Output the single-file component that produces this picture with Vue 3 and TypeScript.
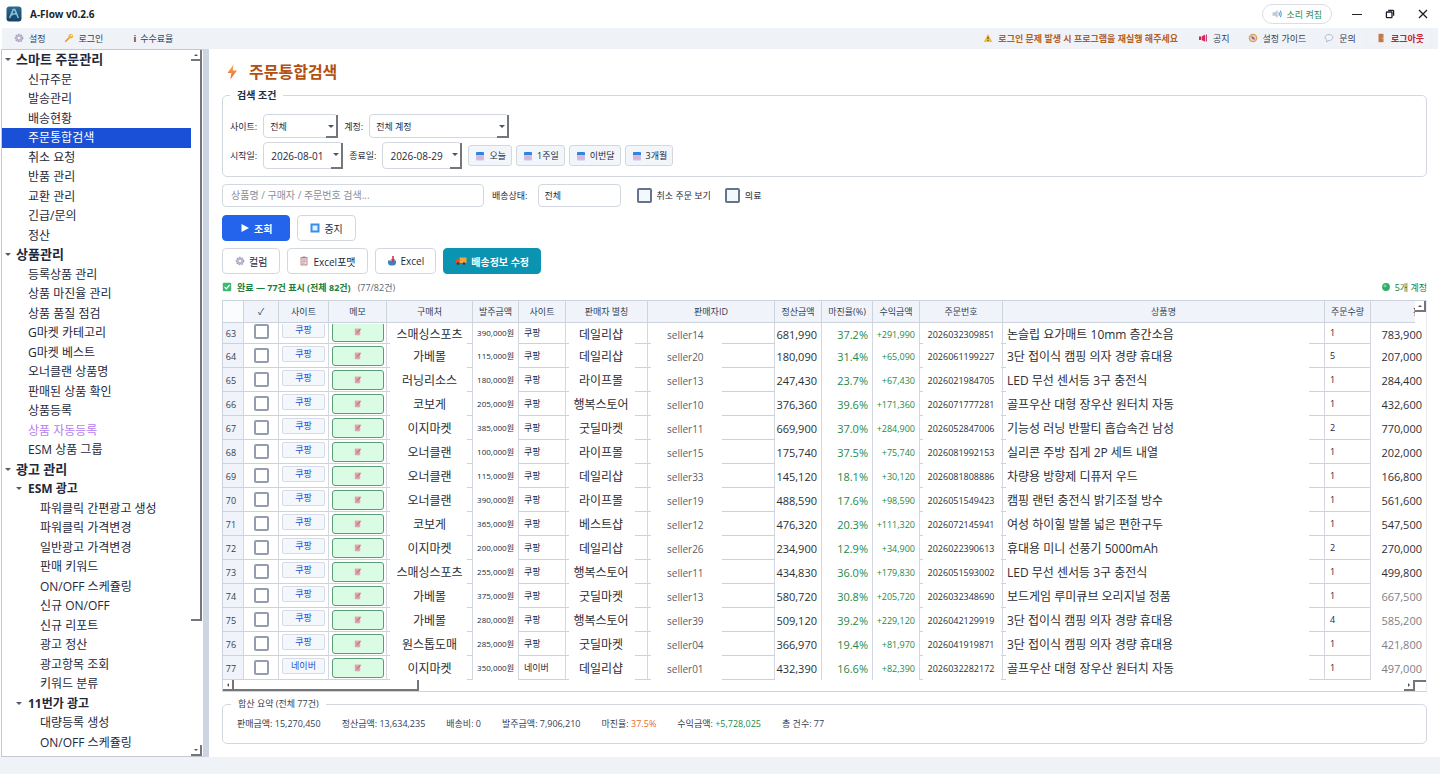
<script setup lang="ts">
import { ref } from 'vue'

interface TreeNode {
  text: string
  level: 'root' | 'item' | 'group' | 'leaf'
  accent?: boolean
}

interface OrderRow {
  no: number
  site: string
  vendor: string
  cost: string
  alias: string
  seller: string
  settle: string
  margin: string
  profit: string
  order: string
  product: string
  qty: number
  price: string
}

const tree: TreeNode[] = [
  { text: '스마트 주문관리', level: 'root' },
  { text: '신규주문', level: 'item' },
  { text: '발송관리', level: 'item' },
  { text: '배송현황', level: 'item' },
  { text: '주문통합검색', level: 'item' },
  { text: '취소 요청', level: 'item' },
  { text: '반품 관리', level: 'item' },
  { text: '교환 관리', level: 'item' },
  { text: '긴급/문의', level: 'item' },
  { text: '정산', level: 'item' },
  { text: '상품관리', level: 'root' },
  { text: '등록상품 관리', level: 'item' },
  { text: '상품 마진율 관리', level: 'item' },
  { text: '상품 품질 점검', level: 'item' },
  { text: 'G마켓 카테고리', level: 'item' },
  { text: 'G마켓 베스트', level: 'item' },
  { text: '오너클랜 상품명', level: 'item' },
  { text: '판매된 상품 확인', level: 'item' },
  { text: '상품등록', level: 'item' },
  { text: '상품 자동등록', level: 'item', accent: true },
  { text: 'ESM 상품 그룹', level: 'item' },
  { text: '광고 관리', level: 'root' },
  { text: 'ESM 광고', level: 'group' },
  { text: '파워클릭 간편광고 생성', level: 'leaf' },
  { text: '파워클릭 가격변경', level: 'leaf' },
  { text: '일반광고 가격변경', level: 'leaf' },
  { text: '판매 키워드', level: 'leaf' },
  { text: 'ON/OFF 스케쥴링', level: 'leaf' },
  { text: '신규 ON/OFF', level: 'leaf' },
  { text: '신규 리포트', level: 'leaf' },
  { text: '광고 정산', level: 'leaf' },
  { text: '광고항목 조회', level: 'leaf' },
  { text: '키워드 분류', level: 'leaf' },
  { text: '11번가 광고', level: 'group' },
  { text: '대량등록 생성', level: 'leaf' },
  { text: 'ON/OFF 스케쥴링', level: 'leaf' },
]
const selected = ref(4)

const raw: [string, string, string, string, string, string, string, string, string, string, number, string][] = [
  ['쿠팡', '스매싱스포츠', '390,000원', '데일리샵', 'seller14', '681,990', '37.2%', '+291,990', '2026032309851', '논슬립 요가매트 10mm 층간소음', 1, '783,900'],
  ['쿠팡', '가베몰', '115,000원', '데일리샵', 'seller20', '180,090', '31.4%', '+65,090', '2026061199227', '3단 접이식 캠핑 의자 경량 휴대용', 5, '207,000'],
  ['쿠팡', '러닝리소스', '180,000원', '라이프몰', 'seller13', '247,430', '23.7%', '+67,430', '2026021984705', 'LED 무선 센서등 3구 충전식', 1, '284,400'],
  ['쿠팡', '코보게', '205,000원', '행복스토어', 'seller10', '376,360', '39.6%', '+171,360', '2026071777281', '골프우산 대형 장우산 원터치 자동', 1, '432,600'],
  ['쿠팡', '이지마켓', '385,000원', '굿딜마켓', 'seller11', '669,900', '37.0%', '+284,900', '2026052847006', '기능성 러닝 반팔티 흡습속건 남성', 2, '770,000'],
  ['쿠팡', '오너클랜', '100,000원', '라이프몰', 'seller15', '175,740', '37.5%', '+75,740', '2026081992153', '실리콘 주방 집게 2P 세트 내열', 1, '202,000'],
  ['쿠팡', '오너클랜', '115,000원', '데일리샵', 'seller33', '145,120', '18.1%', '+30,120', '2026081808886', '차량용 방향제 디퓨저 우드', 1, '166,800'],
  ['쿠팡', '오너클랜', '390,000원', '라이프몰', 'seller19', '488,590', '17.6%', '+98,590', '2026051549423', '캠핑 랜턴 충전식 밝기조절 방수', 1, '561,600'],
  ['쿠팡', '코보게', '365,000원', '베스트샵', 'seller12', '476,320', '20.3%', '+111,320', '2026072145941', '여성 하이힐 발볼 넓은 편한구두', 1, '547,500'],
  ['쿠팡', '이지마켓', '200,000원', '데일리샵', 'seller26', '234,900', '12.9%', '+34,900', '2026022390613', '휴대용 미니 선풍기 5000mAh', 2, '270,000'],
  ['쿠팡', '스매싱스포츠', '255,000원', '행복스토어', 'seller11', '434,830', '36.0%', '+179,830', '2026051593002', 'LED 무선 센서등 3구 충전식', 1, '499,800'],
  ['쿠팡', '가베몰', '375,000원', '굿딜마켓', 'seller13', '580,720', '30.8%', '+205,720', '2026032348690', '보드게임 루미큐브 오리지널 정품', 1, '667,500'],
  ['쿠팡', '가베몰', '280,000원', '행복스토어', 'seller39', '509,120', '39.2%', '+229,120', '2026042129919', '3단 접이식 캠핑 의자 경량 휴대용', 4, '585,200'],
  ['쿠팡', '원스톱도매', '285,000원', '굿딜마켓', 'seller04', '366,970', '19.4%', '+81,970', '2026041919871', '3단 접이식 캠핑 의자 경량 휴대용', 1, '421,800'],
  ['네이버', '이지마켓', '350,000원', '데일리샵', 'seller01', '432,390', '16.6%', '+82,390', '2026032282172', '골프우산 대형 장우산 원터치 자동', 1, '497,000'],
]
const rows: OrderRow[] = raw.map((r, i) => ({
  no: 63 + i,
  site: r[0],
  vendor: r[1],
  cost: r[2],
  alias: r[3],
  seller: r[4],
  settle: r[5],
  margin: r[6],
  profit: r[7],
  order: r[8],
  product: r[9],
  qty: r[10],
  price: r[11],
}))

const quickRanges = ['오늘', '1주일', '이번달', '3개월']
const startDate = ref('2026-08-01')
const endDate = ref('2026-08-29')
const keyword = ref('')
const showCancelled = ref(false)
const medical = ref(false)
</script>

<template>
  <div class="app">
    <svg class="defs" aria-hidden="true">
      <symbol id="gear" viewBox="0 0 10 10">
        <circle cx="5" cy="5" r="3.6" fill="#c9c3d6" stroke="#a5a0b8" stroke-width="1.4" stroke-dasharray="1.5 1.1" />
        <circle cx="5" cy="5" r="2.9" fill="#b9b3c9" />
        <circle cx="5" cy="5" r="1.3" fill="#f5f5fa" />
      </symbol>
      <symbol id="calendar" viewBox="0 0 10 10">
        <rect x="1" y="1" width="8" height="8.4" rx="1" fill="#cdbfe6" />
        <path d="M1 4V2a1 1 0 0 1 1-1h6a1 1 0 0 1 1 1v2z" fill="#2f86e0" />
        <path d="M2.4 5.6h5.2M2.4 7.4h5.2" stroke="#e9a9c9" stroke-width=".8" stroke-dasharray="1.2 .7" />
      </symbol>
      <symbol id="memo" viewBox="0 0 10 10">
        <rect x="2" y="1.6" width="6" height="7.6" rx=".8" fill="#dfa9b4" />
        <path d="M3 4.4h4M3 6h4M3 7.6h3" stroke="#c58496" stroke-width=".7" />
        <path d="M4.6 5.4 8 1.800l.9.9-3.400 3.500z" fill="#d9774a" />
      </symbol>
    </svg>

    <header class="titlebar">
      <svg class="logo" viewBox="0 0 16 16" aria-hidden="true">
        <defs>
          <linearGradient id="lg" x1="0" y1="0" x2="0" y2="1">
            <stop offset="0" stop-color="#2a6c94" />
            <stop offset="1" stop-color="#153f66" />
          </linearGradient>
        </defs>
        <rect x=".5" y=".5" width="15" height="15" rx="3" fill="url(#lg)" />
        <path d="M3.6 12 7.2 3.6h1.6l3.6 8.4M5.2 9.2c2-1.8 3.6-2 5.6-1" fill="none" stroke="#8fc0d8" stroke-width="1.5" />
      </svg>
      <h1>A-Flow v0.2.6</h1>
      <button class="sound" type="button">
        <svg width="10" height="10" viewBox="0 0 10 10" aria-hidden="true">
          <path d="M.5 3.2h2.2L5.6 1v8L2.7 6.8H.5z" fill="#c5cad6" />
          <path d="M6.8 3.2q1.2 1.8 0 3.6M8.2 1.8q2 3.2 0 6.4" fill="none" stroke="#5a9bea" stroke-width="1.1" />
        </svg>
        소리 켜짐
      </button>
      <button class="win" type="button" aria-label="최소화">
        <svg width="12" height="12" viewBox="0 0 12 12"><path d="M1 6.5h10" stroke="#222" /></svg>
      </button>
      <button class="win" type="button" aria-label="이전 크기로">
        <svg width="12" height="12" viewBox="0 0 12 12" fill="none" stroke="#1c1c2c" stroke-width="1.3">
          <rect x="2.4" y="4" width="5.6" height="5.6" rx=".6" /><path d="M4.2 2.4h4.6q.8 0 .8.8v4.6" />
        </svg>
      </button>
      <button class="win" type="button" aria-label="닫기">
        <svg width="12" height="12" viewBox="0 0 12 12"><path d="m2 2 8 8M10 2 2 10" stroke="#1c1c2c" stroke-width="1.3" /></svg>
      </button>
    </header>

    <nav class="toolbar" aria-label="도구 모음">
      <button type="button"><svg width="10" height="10"><use href="#gear" /></svg>설정</button>
      <button type="button">
        <svg width="10" height="10" viewBox="0 0 10 10" aria-hidden="true">
          <circle cx="6.8" cy="3.2" r="2.3" fill="#f2b63c" /><circle cx="7.4" cy="2.6" r=".7" fill="#fff" />
          <path d="M5.4 4.6 1.2 8.8" stroke="#e7962b" stroke-width="1.5" />
        </svg>로그인
      </button>
      <button class="fee" type="button"><b>i</b>수수료율</button>
      <span class="warn">
        <svg width="10" height="10" viewBox="0 0 10 10" aria-hidden="true">
          <path d="M5 1 9.4 9H.6z" fill="#f5bd3d" /><path d="M5 3.6v2.6M5 7v1" stroke="#4b3a12" stroke-width="1" />
        </svg>로그인 문제 발생 시 프로그램을 재실행 해주세요
      </span>
      <button class="notice" type="button">
        <svg width="10" height="10" viewBox="0 0 10 10" aria-hidden="true">
          <path d="M1 3.4h2.4v3.6H1z" fill="#b8325f" /><path d="M4 3.2 7.2 1.4v7.4L4 7.2z" fill="#e0235f" /><path d="M8 1.4h1v7.2H8z" fill="#c2406b" />
        </svg>공지
      </button>
      <button class="guide" type="button">
        <svg width="10" height="10" viewBox="0 0 10 10" aria-hidden="true">
          <circle cx="5" cy="5" r="3.7" fill="#d8d4da" stroke="#e0a050" stroke-width="1.3" />
          <path d="m3 3 3 1.2L7 7 4.2 5.8z" fill="#a2566a" />
        </svg>설정 가이드
      </button>
      <button class="ask" type="button">
        <svg width="10" height="10" viewBox="0 0 10 10" aria-hidden="true">
          <path d="M5 1.5c2.3 0 3.8 1.3 3.8 3S7.3 7.5 5 7.5L2.6 8.8 2.8 7C1.8 6.5 1.2 5.6 1.2 4.5c0-1.7 1.5-3 3.800-3z" fill="#f3f4fb" stroke="#aab0cc" stroke-width=".9" />
        </svg>문의
      </button>
      <button class="logout" type="button">
        <svg width="10" height="10" viewBox="0 0 10 10" aria-hidden="true">
          <rect x="2.5" y=".8" width="5" height="8.4" fill="#c27a4c" /><circle cx="6.3" cy="5" r=".6" fill="#f5d9a0" />
        </svg>로그아웃
      </button>
    </nav>

    <div class="body">
      <aside class="sidebar">
        <ul class="tree">
          <li v-for="(n, i) in tree" :key="i">
            <button
              type="button"
              :class="[n.level, { accent: n.accent, on: i === selected }]"
              @click="selected = i"
            >
              {{ n.text }}
            </button>
          </li>
        </ul>
        <div class="vbar" aria-hidden="true">
          <span class="arrow up"></span>
          <span class="thumb"></span>
          <span class="rest"></span>
          <span class="arrow down"></span>
        </div>
      </aside>
      <div class="splitter"></div>

      <main class="main">
        <h2>
          <svg width="20" height="18" viewBox="0 0 20 18" aria-hidden="true">
            <defs>
              <linearGradient id="bolt" x1="0" y1="0" x2="0" y2="1">
                <stop offset="0" stop-color="#fbb040" /><stop offset="1" stop-color="#ee5a3c" />
              </linearGradient>
            </defs>
            <path d="M11.5 1.500 5.500 10h4L8.200 16.500 15 7.500h-4.200z" fill="url(#bolt)" />
          </svg>
          주문통합검색
        </h2>

        <fieldset class="cond">
          <legend>검색 조건</legend>
          <div class="line">
            <label for="site">사이트:</label>
            <span class="combo site"><select id="site"><option>전체</option></select></span>
            <label for="account">계정:</label>
            <span class="combo account"><select id="account"><option>전체 계정</option></select></span>
          </div>
          <div class="line">
            <label for="from">시작일:</label>
            <span class="combo date"><input id="from" v-model="startDate" type="text" /></span>
            <label for="to">종료일:</label>
            <span class="combo date"><input id="to" v-model="endDate" type="text" /></span>
            <div class="quick">
              <button v-for="q in quickRanges" :key="q" type="button">
                <svg width="10" height="10"><use href="#calendar" /></svg>{{ q }}
              </button>
            </div>
          </div>
        </fieldset>

        <div class="search">
          <input v-model="keyword" class="box" type="text" aria-label="검색어" placeholder="상품명 / 구매자 / 주문번호 검색..." />
          <label for="ship">배송상태:</label>
          <select id="ship" class="box ship"><option>전체</option></select>
          <label class="check"><input v-model="showCancelled" type="checkbox" />취소 주문 보기</label>
          <label class="check"><input v-model="medical" type="checkbox" />의료</label>
        </div>

        <div class="actions first">
          <button class="primary" type="button">
            <svg width="10" height="10" viewBox="0 0 10 10" aria-hidden="true"><path d="M1.5 1 9 5 1.500 9z" fill="#fff" /></svg>조회
          </button>
          <button type="button">
            <svg width="10" height="10" viewBox="0 0 10 10" aria-hidden="true">
              <rect x="1.5" y="1.5" width="7" height="7" fill="#dff0ff" stroke="#3b8ee8" stroke-width="2" />
            </svg>중지
          </button>
        </div>
        <div class="actions">
          <button type="button"><svg width="10" height="10"><use href="#gear" /></svg>컬럼</button>
          <button class="tight" type="button">
            <svg width="10" height="10" viewBox="0 0 10 10" aria-hidden="true">
              <rect x="1.5" y="1" width="7" height="8.4" rx=".6" fill="#c98a80" /><rect x="2.5" y="2.4" width="5" height="6" fill="#f2e4ea" />
              <path d="M3.2 4h3.6M3.2 5.6h3.6M3.2 7.2h2.4" stroke="#a7819a" stroke-width=".7" /><rect x="3.6" y=".5" width="2.8" height="1.6" fill="#8b8fa3" />
            </svg>Excel포맷
          </button>
          <button class="tight" type="button">
            <svg width="10" height="10" viewBox="0 0 10 10" aria-hidden="true">
              <path d="M1 4.500h8v2A3 3 0 0 1 6 9.400H4A3 3 0 0 1 1 6.500z" fill="#3f7fc0" /><path d="M5.200 0h1.600v3.200h1.500L6 6 3.700 3.200h1.500z" fill="#d32f4b" />
            </svg>Excel
          </button>
          <button class="teal tight" type="button">
            <svg width="12" height="10" viewBox="0 0 12 10" aria-hidden="true">
              <rect x="4.5" y="1.5" width="7" height="5.5" fill="#f0a63a" /><path d="M.6 7V4.6L2 2.800h2.500V7z" fill="#e5502e" />
              <circle cx="3" cy="7.6" r="1.3" fill="#3a3a44" /><circle cx="9" cy="7.6" r="1.3" fill="#3a3a44" />
            </svg>배송정보 수정
          </button>
        </div>

        <div class="status">
          <svg width="10" height="10" viewBox="0 0 10 10" aria-hidden="true">
            <rect x=".8" y=".8" width="8.4" height="8.4" rx="1" fill="#3fb873" /><path d="m2.600 5 1.800 1.900L7.600 3" fill="none" stroke="#fff" stroke-width="1.2" />
          </svg>
          <strong>완료 — 77건 표시 (전체 82건)</strong>
          <span>(77/82건)</span>
          <span class="accounts">
            <svg width="10" height="10" viewBox="0 0 10 10" aria-hidden="true"><circle cx="5" cy="5" r="3.9" fill="#2fae66" /><circle cx="4" cy="3.8" r="1.6" fill="#6fd598" /></svg>5개 계정
          </span>
        </div>

        <div class="grid">
          <table>
            <colgroup>
              <col class="w21" /><col class="w35" /><col class="w50" /><col class="w58" /><col class="w86" /><col class="w46" />
              <col class="w47" /><col class="w82" /><col class="w127" /><col class="w47" /><col class="w51" /><col class="w47" />
              <col class="w83" /><col /><col class="w46" /><col class="w55" />
            </colgroup>
            <thead>
              <tr>
                <th class="corner"></th>
                <th>✓</th>
                <th>사이트</th>
                <th>메모</th>
                <th>구매처</th>
                <th>발주금액</th>
                <th>사이트</th>
                <th>판매자 별칭</th>
                <th>판매자ID</th>
                <th>정산금액</th>
                <th>마진율(%)</th>
                <th>수익금액</th>
                <th>주문번호</th>
                <th>상품명</th>
                <th>주문수량</th>
                <th class="cut">판</th>
              </tr>
            </thead>
            <tbody>
              <tr v-for="r in rows" :key="r.no">
                <th class="no" scope="row">{{ r.no }}</th>
                <td><div class="clip"><div class="in"><input type="checkbox" :aria-label="`${r.no}번 선택`" /></div></div></td>
                <td><div class="clip"><div class="in"><span class="badge">{{ r.site }}</span></div></div></td>
                <td>
                  <div class="clip"><div class="in">
                    <button class="memo" type="button" :aria-label="`${r.no}번 메모`"><svg width="9" height="9"><use href="#memo" /></svg></button>
                  </div></div>
                </td>
                <td class="big vendor">{{ r.vendor }}</td>
                <td class="cost">{{ r.cost }}</td>
                <td class="small">{{ r.site }}</td>
                <td class="big alias">{{ r.alias }}</td>
                <td class="big seller">{{ r.seller }}</td>
                <td class="big num">{{ r.settle }}</td>
                <td class="big num green">{{ r.margin }}</td>
                <td class="big profit green">{{ r.profit }}</td>
                <td class="big order">{{ r.order }}</td>
                <td class="big product">{{ r.product }}</td>
                <td class="small">{{ r.qty }}</td>
                <td class="big num price" :class="{ faded: r.no > 73 }">{{ r.price }}</td>
              </tr>
            </tbody>
          </table>
          <div class="hbar" aria-hidden="true">
            <span class="arrow left"></span><span class="hthumb"></span><span class="hrest"></span><span class="arrow right"></span><span class="grip"></span>
          </div>
          <div class="vtop" aria-hidden="true"><span class="arrow up"></span></div>
        </div>

        <fieldset class="summary">
          <legend>합산 요약 (전체 77건)</legend>
          <span>판매금액: 15,270,450</span>
          <span>정산금액: 13,634,235</span>
          <span>배송비: 0</span>
          <span>발주금액: 7,906,210</span>
          <span>마진율: <em class="orange">37.5%</em></span>
          <span>수익금액: <em class="green">+5,728,025</em></span>
          <span>총 건수: 77</span>
        </fieldset>
      </main>
    </div>
    <footer class="foot"></footer>
  </div>
</template>

<style>
body {
  margin: 0;
  background: #fff;
}
</style>

<style scoped>
.app {
  --line: #d3d8e0;
  --dark: #74767c;
  --bar: #eff3f8;
  min-height: 100vh;
  display: flex;
  flex-direction: column;
  font-family: 'Open Sans', 'Noto Sans CJK KR', sans-serif;
  font-size: 9px;
  color: #1e293b;
  background: #fff;
}
.app *,
.app *::before,
.app *::after {
  box-sizing: border-box;
}
.defs {
  position: absolute;
  width: 0;
  height: 0;
}
button,
input,
select {
  font: inherit;
  color: inherit;
  margin: 0;
  padding: 0;
  border: 0;
  background: none;
  border-radius: 0;
}
button {
  white-space: nowrap;
  cursor: pointer;
}
svg {
  flex: none;
  display: block;
}

/* title bar */
.titlebar {
  height: 28px;
  display: flex;
  align-items: center;
  padding: 0 8px 0 6px;
}
.logo {
  width: 16px;
  height: 16px;
}
h1 {
  margin: 0 auto 0 8px;
  font-size: 10px;
  font-weight: 700;
  color: #1b1f2b;
}
.sound {
  height: 20px;
  padding: 0 9px;
  margin-right: 8px;
  display: flex;
  align-items: center;
  gap: 5px;
  border: 1px solid #d9dee6;
  border-radius: 10px;
  color: #1f8a5b;
}
.win {
  width: 33px;
  height: 24px;
  display: grid;
  place-items: center;
}
.win:last-child {
  margin-right: -7px;
}

/* toolbar */
.toolbar {
  height: 21px;
  margin: 0 2px;
  padding: 0 6px 1px 12px;
  display: flex;
  align-items: center;
  background: var(--bar);
  color: #334155;
}
.toolbar button,
.warn {
  display: flex;
  align-items: center;
  gap: 5px;
}
.toolbar button + button {
  margin-left: 18px;
}
.toolbar .fee {
  gap: 4px;
  margin-left: 30px;
}
.warn {
  margin-left: auto;
  margin-right: 20px;
  font-weight: 700;
  color: #b45f1e;
}
.toolbar .logout {
  margin-left: 10px;
  height: 18px;
  padding: 0 7px 0 9px;
  border: 1px solid #f1eef2;
  font-weight: 700;
  color: #c8202c;
}

/* body */
.body {
  flex: 1;
  display: flex;
}
.sidebar {
  width: 202px;
  flex: none;
  margin-left: 1px;
  border: 1px solid #c3c7ce;
  border-right: 0;
  display: flex;
}
.tree {
  flex: 1;
  min-width: 0;
  margin: 0 0 4px;
  padding: 0;
  list-style: none;
  display: flex;
  flex-direction: column;
}
.tree li {
  flex: 1;
  display: flex;
}
.tree button {
  flex: 1;
  position: relative;
  text-align: left;
  font-size: 12px;
  line-height: 19px;
  padding-left: 26px;
}
.tree .root {
  padding-left: 14px;
  font-size: 13px;
  font-weight: 700;
}
.tree .group {
  font-weight: 700;
}
.tree .leaf {
  padding-left: 38px;
}
.tree .root::before,
.tree .group::before {
  content: '';
  position: absolute;
  left: 3px;
  top: 8px;
  border: 3px solid transparent;
  border-top-color: #555b66;
  border-bottom: 0;
}
.tree .group::before {
  left: 14px;
}
.tree .accent {
  color: #b77df0;
}
.tree .on {
  background: #1a4fd8;
  color: #fff;
}
.vbar {
  width: 12px;
  display: flex;
  flex-direction: column;
}
.arrow {
  position: relative;
  flex: none;
  width: 11px;
  height: 11px;
  background: #fff;
  border-right: 2px solid var(--dark);
  border-bottom: 2px solid var(--dark);
  display: grid;
  place-items: center;
}
.arrow::before {
  content: '';
  border: 2px solid transparent;
}
.up::before {
  border-bottom-color: #555;
  border-top: 0;
}
.down::before {
  border-top-color: #555;
  border-bottom: 0;
}
.left::before {
  border-right-color: #555;
  border-left: 0;
}
.right::before {
  border-left-color: #555;
  border-right: 0;
}
.thumb {
  flex: 560;
  width: 11px;
  border-right: 2px solid var(--dark);
  border-bottom: 2px solid var(--dark);
}
.rest {
  flex: 125;
}
.splitter {
  width: 6px;
  flex: none;
  background: #ccd5e1;
}
.main {
  flex: 1;
  min-width: 0;
  padding: 10px 13px 12px;
  display: flex;
  flex-direction: column;
}
h2 {
  margin: 0;
  height: 26px;
  display: flex;
  align-items: center;
  gap: 7px;
  font-size: 16px;
  line-height: 26px;
  color: #b4500f;
}
fieldset {
  min-width: 0;
  margin: 0;
  border: 1px solid var(--line);
  border-radius: 5px;
}
legend {
  padding: 0 7px;
  height: 14px;
  line-height: 14px;
}
.cond {
  margin-top: 3px;
  padding: 12px 7px 7px;
}
.cond legend {
  font-size: 10px;
  font-weight: 700;
}
.line {
  display: flex;
  align-items: center;
  gap: 6px;
}
.line + .line {
  margin-top: 4px;
}
.combo {
  position: relative;
  display: block;
  height: 24px;
  border: 1px solid var(--line);
  border-radius: 4px;
}
.combo::before {
  content: '';
  position: absolute;
  right: 3px;
  top: 10px;
  border: 3px solid transparent;
  border-top-color: #4b5563;
  border-bottom: 0;
}
.combo::after {
  content: '';
  position: absolute;
  right: -1px;
  top: 0;
  bottom: -1px;
  width: 12px;
  border-right: 2px solid var(--dark);
  border-bottom: 2px solid var(--dark);
  pointer-events: none;
}
.combo select,
.combo input {
  display: block;
  width: 100%;
  height: 100%;
  padding: 0 14px 0 6px;
  appearance: none;
}
.site {
  width: 75px;
}
.account {
  width: 140px;
}
.date {
  width: 80px;
  height: 27px;
}
.date input {
  font-size: 10px;
  padding-left: 7px;
}
.quick {
  display: flex;
  gap: 4px;
}
.quick button {
  height: 21px;
  padding: 0 5px 0 6px;
  display: flex;
  align-items: center;
  gap: 4px;
  border: 1px solid var(--line);
  border-radius: 3px;
  background: #f2f6fb;
}
.search {
  margin-top: 7px;
  display: flex;
  align-items: center;
}
.box {
  width: 262px;
  height: 23px;
  padding: 0 8px;
  border: 1px solid var(--line);
  border-radius: 4px;
  margin-right: 8px;
}
.box::placeholder {
  font-size: 10px;
  color: #8b8f98;
  opacity: 1;
}
.ship {
  appearance: none;
  width: 83px;
  padding: 0 6px;
  margin: 0 16px 0 10px;
}
.check {
  display: flex;
  align-items: center;
  gap: 5px;
  margin-right: 14px;
}
input[type='checkbox'] {
  appearance: none;
  width: 15px;
  height: 15px;
  border: 2px solid #64748b;
  border-radius: 2px;
  background: #f3f8fc;
}
input[type='checkbox']:checked {
  background: #2563eb;
}
.actions {
  display: flex;
  gap: 7px;
  margin-top: 7px;
}
.first {
  margin-top: 8px;
}
.actions button {
  height: 26px;
  padding: 0 12px;
  display: flex;
  align-items: center;
  gap: 4px;
  border: 1px solid var(--line);
  border-radius: 4px;
  font-size: 10px;
}
.actions .tight {
  padding: 0 11px;
}
.actions .primary {
  padding: 0 17px;
  background: #2463eb;
  border-color: #2463eb;
  color: #fff;
  font-weight: 700;
}
.actions .teal {
  background: #0b93b2;
  border-color: #0b93b2;
  color: #fff;
  font-weight: 700;
}
.status {
  height: 26px;
  display: flex;
  align-items: center;
  gap: 5px;
  color: #5b6472;
}
.status strong {
  color: #15803d;
  margin-right: 2px;
}
.accounts {
  margin-left: auto;
  display: flex;
  align-items: center;
  gap: 4px;
  color: #15803d;
}

/* grid */
.grid {
  position: relative;
  border: 1px solid #cdd3dd;
  border-right-color: #e8ebf0;
}
table {
  width: 100%;
  table-layout: fixed;
  border-collapse: separate;
  border-spacing: 0;
}
.w21 { width: 21px; }
.w35 { width: 35px; }
.w46 { width: 46px; }
.w47 { width: 47px; }
.w50 { width: 50px; }
.w51 { width: 51px; }
.w55 { width: 55px; }
.w58 { width: 58px; }
.w82 { width: 82px; }
.w83 { width: 83px; }
.w86 { width: 86px; }
.w127 { width: 127px; }
th,
td {
  padding: 0;
  white-space: nowrap;
  overflow: hidden;
}
thead th {
  height: 22px;
  background: #f0f4fa;
  border-right: 1px solid #cdd3dd;
  border-bottom: 1px solid #cdd3dd;
  font-weight: 400;
  font-size: 9px;
  color: #334155;
}
thead .corner {
  background: #fbfcfe;
}
thead .cut {
  text-align: left;
  padding-left: 42px;
  border-right: 0;
}
tbody th,
tbody td {
  --a: 100%;
  --b: 100%;
  height: 24px;
  border-right: 1px solid var(--line);
  background-image: linear-gradient(to right, #ccd2da var(--a), transparent var(--a), transparent var(--b), #ccd2da var(--b));
  background-repeat: no-repeat;
  background-size: 100% 1px;
  background-position: left bottom;
}
tbody tr:first-child th,
tbody tr:first-child td {
  height: 21px;
}
tbody .no {
  background-color: #f0f4fa;
  font-weight: 400;
  font-size: 9px;
  padding-right: 4px;
  color: #334155;
}
.clip {
  height: 23px;
  overflow: hidden;
  display: flex;
  flex-direction: column;
  justify-content: flex-end;
}
tr:first-child .clip {
  height: 20px;
}
.in {
  flex: none;
  height: 23px;
  padding-bottom: 1px;
  display: flex;
  align-items: center;
  justify-content: center;
}
td input[type='checkbox'] {
  border-color: #929eb0;
  background: #fff;
}
.badge {
  width: 43px;
  height: 16px;
  margin-bottom: 3px;
  line-height: 14px;
  text-align: center;
  border: 1px solid #d5dbe6;
  border-radius: 2px;
  background: #f4f7fc;
  color: #2450d8;
}
.memo {
  width: 52px;
  height: 20px;
  display: grid;
  place-items: center;
  border: 1px solid #5a9e74;
  border-radius: 3px;
  background: #dafbe4;
}
.big {
  padding-top: 2px;
  font-size: 12px;
  line-height: 18px;
  color: #2b2f36;
}
.vendor {
  --a: 3px;
  --b: 80px;
  text-align: center;
}
.cost {
  --a: 0px;
  font-size: 8px;
  text-align: right;
  padding-right: 4px;
  padding-bottom: 2px;
}
.small {
  padding-left: 5px;
  padding-bottom: 2px;
  font-size: 9px;
}
.alias {
  --a: 3px;
  --b: 69px;
  text-align: center;
  padding-right: 11px;
}
.seller {
  --a: 3px;
  --b: 74px;
  font-size: 10px;
  padding-left: 19px;
  color: #5a5f68;
}
.num {
  --a: 0px;
  font-size: 11px;
  text-align: right;
  padding-right: 4px;
}
.profit {
  --a: 0px;
  font-size: 9px;
  text-align: right;
  padding-right: 4px;
}
.order {
  --a: 3px;
  --b: 81px;
  font-size: 9px;
  text-align: center;
}
.product {
  --a: 3px;
  --b: calc(100% - 15px);
  padding-left: 4px;
}
.green {
  color: #1c8a4b;
}
.price {
  border-right: 0;
}
.faded {
  color: #7d8087;
}
.hbar {
  height: 11px;
  display: flex;
}
.hthumb {
  width: 185px;
  border-right: 2px solid var(--dark);
  border-bottom: 2px solid var(--dark);
}
.hrest {
  flex: 1;
}
.grip {
  width: 11px;
  border-top: 2px solid var(--dark);
}
.vtop {
  position: absolute;
  top: 0;
  right: 0;
  width: 11px;
  height: 22px;
  background: #fff;
}

.summary {
  margin-top: 5px;
  padding: 6px 14px 13px;
  display: flex;
  gap: 21px;
  color: #334155;
}
.summary legend {
  margin-left: -6px;
}
em {
  font-style: normal;
}
.orange {
  color: #ea6a1f;
}
.foot {
  height: 17px;
  background: #eff3f7;
}
</style>
